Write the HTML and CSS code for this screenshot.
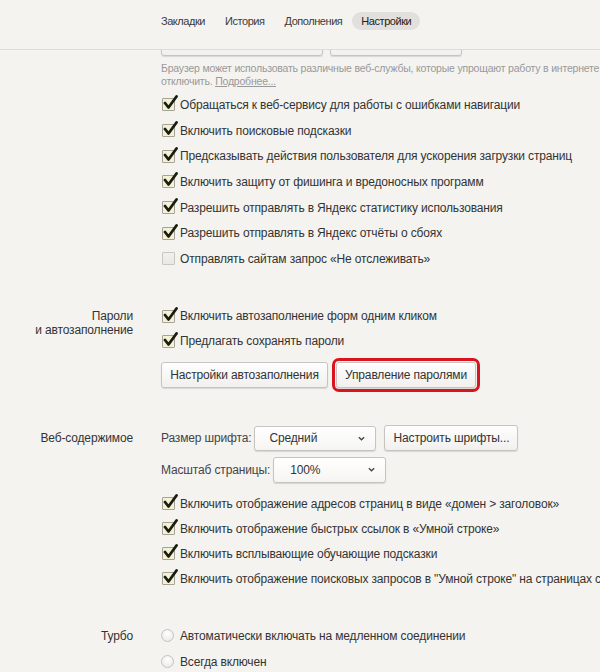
FILE: index.html
```html
<!DOCTYPE html>
<html lang="ru">
<head>
  <meta charset="UTF-8" />
  <title>Настройки</title>
  <link rel="stylesheet" href="styles.css">
</head>
<body>
  <header class="tabs-bar">
    <nav class="tabs">
      <a class="tab">Закладки</a>
      <a class="tab">История</a>
      <a class="tab">Дополнения</a>
      <a class="tab tab-active">Настройки</a>
    </nav>
  </header>

  <main class="settings">
    <section class="group">
      <div class="group-label"></div>
      <div class="group-body">
        <div class="btn-row btn-row-top">
          <button class="btn btn-top-1">&nbsp;</button>
          <button class="btn btn-top-2">&nbsp;</button>
        </div>
        <p class="note">Браузер может использовать различные веб-службы, которые упрощают работу в интернете.<br>отключить. <a class="note-link">Подробнее...</a></p>
        <ul class="options options-loose">
          <li class="option"><span class="check is-on"><svg viewBox="0 0 16 16"><polyline points="3,8 6.5,12.5 14.5,1.5" /></svg></span>Обращаться к веб-сервису для работы с ошибками навигации</li>
          <li class="option"><span class="check is-on"><svg viewBox="0 0 16 16"><polyline points="3,8 6.5,12.5 14.5,1.5" /></svg></span>Включить поисковые подсказки</li>
          <li class="option"><span class="check is-on"><svg viewBox="0 0 16 16"><polyline points="3,8 6.5,12.5 14.5,1.5" /></svg></span>Предсказывать действия пользователя для ускорения загрузки страниц</li>
          <li class="option"><span class="check is-on"><svg viewBox="0 0 16 16"><polyline points="3,8 6.5,12.5 14.5,1.5" /></svg></span>Включить защиту от фишинга и вредоносных программ</li>
          <li class="option"><span class="check is-on"><svg viewBox="0 0 16 16"><polyline points="3,8 6.5,12.5 14.5,1.5" /></svg></span>Разрешить отправлять в Яндекс статистику использования</li>
          <li class="option"><span class="check is-on"><svg viewBox="0 0 16 16"><polyline points="3,8 6.5,12.5 14.5,1.5" /></svg></span>Разрешить отправлять в Яндекс отчёты о сбоях</li>
          <li class="option"><span class="check"></span>Отправлять сайтам запрос «Не отслеживать»</li>
        </ul>
      </div>
    </section>

    <section class="group group-passwords">
      <div class="group-label">Пароли<br>и автозаполнение</div>
      <div class="group-body">
        <ul class="options">
          <li class="option"><span class="check is-on"><svg viewBox="0 0 16 16"><polyline points="3,8 6.5,12.5 14.5,1.5" /></svg></span>Включить автозаполнение форм одним кликом</li>
          <li class="option"><span class="check is-on"><svg viewBox="0 0 16 16"><polyline points="3,8 6.5,12.5 14.5,1.5" /></svg></span>Предлагать сохранять пароли</li>
        </ul>
        <div class="btn-row btn-row-passwords">
          <button class="btn btn-autofill">Настройки автозаполнения</button>
          <button class="btn btn-marked">Управление паролями</button>
        </div>
      </div>
    </section>

    <section class="group group-web">
      <div class="group-label">Веб-содержимое</div>
      <div class="group-body">
        <div class="field-row">
          <span class="field-label">Размер шрифта:</span>
          <div class="select select-font">Средний<svg class="chevron" viewBox="0 0 8 5"><polyline points="1,1 4,4 7,1" /></svg></div>
          <button class="btn btn-fonts">Настроить шрифты...</button>
        </div>
        <div class="field-row field-row-zoom">
          <span class="field-label">Масштаб страницы:</span>
          <div class="select select-zoom">100%<svg class="chevron" viewBox="0 0 8 5"><polyline points="1,1 4,4 7,1" /></svg></div>
        </div>
        <ul class="options options-web">
          <li class="option"><span class="check is-on"><svg viewBox="0 0 16 16"><polyline points="3,8 6.5,12.5 14.5,1.5" /></svg></span>Включить отображение адресов страниц в виде «домен &gt; заголовок»</li>
          <li class="option"><span class="check is-on"><svg viewBox="0 0 16 16"><polyline points="3,8 6.5,12.5 14.5,1.5" /></svg></span>Включить отображение быстрых ссылок в «Умной строке»</li>
          <li class="option"><span class="check is-on"><svg viewBox="0 0 16 16"><polyline points="3,8 6.5,12.5 14.5,1.5" /></svg></span>Включить всплывающие обучающие подсказки</li>
          <li class="option"><span class="check is-on"><svg viewBox="0 0 16 16"><polyline points="3,8 6.5,12.5 14.5,1.5" /></svg></span>Включить отображение поисковых запросов в "Умной строке" на страницах с результатами поиска</li>
        </ul>
      </div>
    </section>

    <section class="group group-turbo">
      <div class="group-label">Турбо</div>
      <div class="group-body">
        <ul class="options options-radio">
          <li class="option"><span class="radio"></span>Автоматически включать на медленном соединении</li>
          <li class="option"><span class="radio"></span>Всегда включен</li>
        </ul>
      </div>
    </section>
  </main>
</body>
</html>
```

FILE: styles.css
```css
html, body {
  overflow: hidden;
}

body {
  margin: 0;
  width: 600px;
  height: 672px;
  background: #f4f3f0;
  color: #333;
  font-family: 'Liberation Sans', Arial, sans-serif;
  font-size: 12px;
  letter-spacing: -0.15px;
}

/* top tabs */
.tabs-bar {
  position: relative;
  z-index: 1;
  height: 49px;
  border-bottom: 1px solid #dedcd8;
  background: #f4f3f0;
}

.tabs {
  display: flex;
  padding: 12px 0 0 151px;
}

.tab {
  height: 18px;
  padding: 0 10px;
  line-height: 18px;
  font-size: 11px;
  letter-spacing: -0.45px;
  color: #3a3a3a;
  border-radius: 9px;
}

.tab-active {
  padding: 0 9px;
  background: #e2e0dc;
  color: #222;
}

/* settings groups */
.settings {
  margin-top: -20px;
}

.group {
  display: grid;
  grid-template-columns: 133px 1fr;
  column-gap: 28px;
}

.group-label {
  text-align: right;
  line-height: 14px;
  padding-top: 5.5px;
  white-space: nowrap;
}

.group-passwords {
  margin-top: 32px;
}

.group-web {
  margin-top: 38px;
}

.group-turbo {
  margin-top: 31.5px;
}

.group-turbo .group-label {
  padding-top: 6px;
}

/* buttons */
.btn-row {
  display: flex;
  gap: 8px;
}

.btn {
  height: 26px;
  padding: 0;
  font-family: inherit;
  font-size: 12px;
  letter-spacing: -0.15px;
  color: #333;
  text-align: center;
  background: linear-gradient(#fefefe, #f1f0ee);
  border: 1px solid #c6c4c0;
  border-radius: 3px;
  box-shadow: 0 1px 1px rgba(0, 0, 0, 0.12);
  white-space: nowrap;
}

.btn-top-1 {
  width: 162px;
}

.btn-top-2 {
  width: 132px;
  margin-left: -1px;
}

.btn-row-passwords {
  margin-top: 8px;
}

.btn-autofill {
  width: 167px;
}

.btn-marked {
  width: 140px;
  outline: 3px solid #d9141e;
  outline-offset: 1px;
}

.note {
  margin: 6px 0 0;
  font-size: 10.5px;
  letter-spacing: -0.2px;
  line-height: 13px;
  color: #999;
  white-space: nowrap;
}

.note-link {
  text-decoration: underline;
  color: #999;
}

/* checkboxes */
.options {
  list-style: none;
  margin: 0;
  padding: 0;
  --row: 25px;
}

.options-loose {
  margin-top: 4px;
  --row: 25.7px;
}

.options-web {
  margin-top: 8.5px;
}

.options-radio {
  --row: 26px;
}

.option {
  display: flex;
  align-items: center;
  height: var(--row);
  white-space: nowrap;
}

.check {
  position: relative;
  box-sizing: border-box;
  flex: none;
  width: 13px;
  height: 13px;
  margin: 0 5px 0 1px;
  border: 1px solid #c9c7c1;
  border-radius: 1px;
  background: linear-gradient(#f2f1ed, #e9e8e3);
}

.check.is-on {
  border-color: #a6a396;
  background: #f6f1d6;
}

.check svg {
  position: absolute;
  left: -1px;
  top: -4px;
  width: 16px;
  height: 16px;
  fill: none;
  stroke: #17200f;
  stroke-width: 2.8;
  stroke-linecap: round;
  stroke-linejoin: round;
}

.radio {
  box-sizing: border-box;
  flex: none;
  width: 13px;
  height: 13px;
  margin: 0 6px 0 0;
  border: 1px solid #c5c3be;
  border-radius: 50%;
  background: radial-gradient(circle at 50% 35%, #ffffff, #e6e5e1);
}

/* font / zoom fields */
.field-row {
  display: flex;
  align-items: center;
  height: 25px;
}

.field-row-zoom {
  margin-top: 6px;
  height: 26px;
}

.field-label {
  color: #444;
  margin-right: 3px;
}

.select {
  box-sizing: border-box;
  display: flex;
  align-items: center;
  height: 100%;
  padding-left: 14px;
  background: linear-gradient(#ffffff, #f6f5f3);
  border: 1px solid #c6c4c0;
  border-radius: 3px;
  box-shadow: 0 1px 1px rgba(0, 0, 0, 0.12);
  color: #333;
}

.select-font {
  width: 122px;
}

.select-zoom {
  width: 113px;
  padding-left: 16px;
}

.chevron {
  width: 7px;
  height: 5px;
  margin-left: auto;
  margin-right: 10px;
  fill: none;
  stroke: #444;
  stroke-width: 1.5;
}

.btn-fonts {
  width: 134px;
  margin-left: 8px;
}
```
